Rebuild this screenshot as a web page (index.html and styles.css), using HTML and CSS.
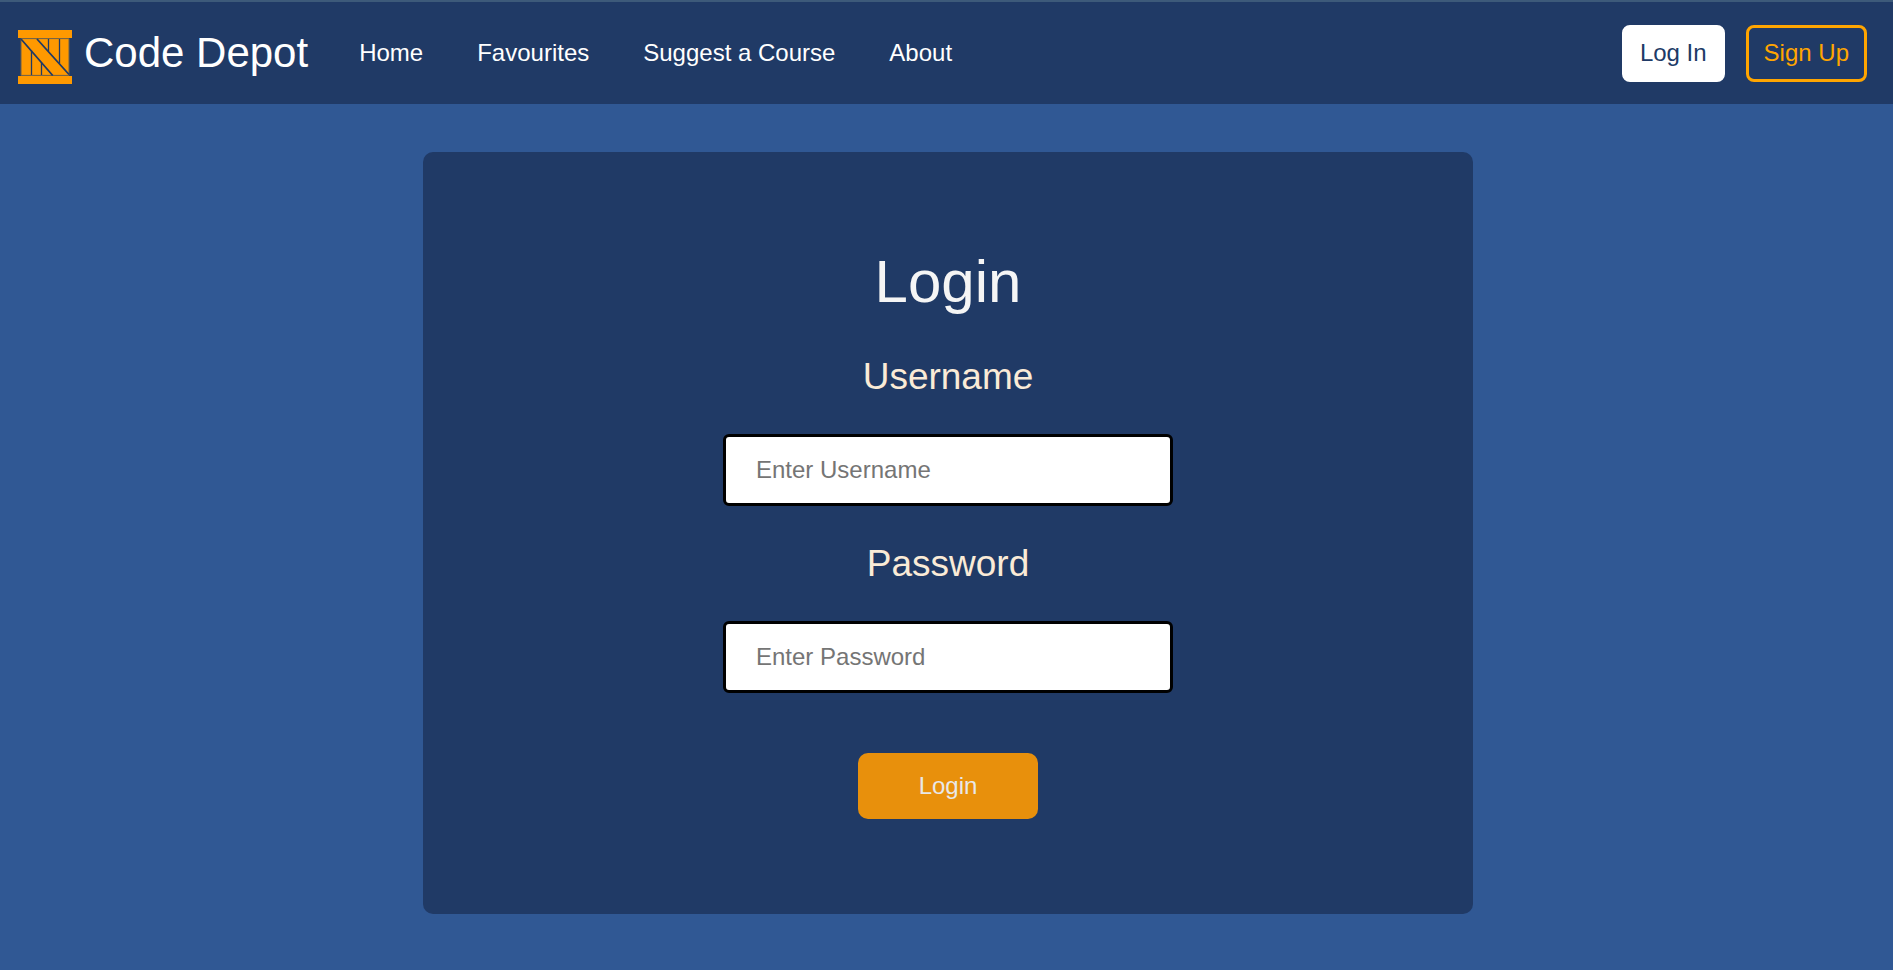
FILE: index.html
```html
<!DOCTYPE html>
<html lang="en">
<head>
    <meta charset="UTF-8">
    <meta name="viewport" content="width=device-width, initial-scale=1.0">
    <title>Code Depot - Login</title>
    <link rel="stylesheet" href="styles.css">
</head>
<body>
    <header class="navbar">
        <a href="#" class="brand">
            <svg class="logo" viewBox="0 0 54 54" aria-hidden="true">
                <rect x="3" y="8" width="48" height="38" fill="#ff9900"/>
                <path d="M3 8.6H51V45.4H3Z" fill="none" stroke="#6b5f4a" stroke-width="1"/>
                <g fill="none" stroke="#203a66" stroke-width="1.3">
                    <path d="M13.5 20.5V45M23.5 32.5V45M30.5 9V21.5M41.5 9V33.5"/>
                    <path stroke-width="1.8" d="M3 9L34.7 45.5M19 9L51 44.5"/>
                </g>
                <rect width="54" height="8" fill="#ff9900"/>
                <rect y="46" width="54" height="8" fill="#ff9900"/>
            </svg>
            <span>Code Depot</span>
        </a>
        <nav class="nav-links">
            <a href="#">Home</a>
            <a href="#">Favourites</a>
            <a href="#">Suggest a Course</a>
            <a href="#">About</a>
        </nav>
        <div class="nav-buttons">
            <button type="button" class="btn btn-login">Log In</button>
            <button type="button" class="btn btn-signup">Sign Up</button>
        </div>
    </header>

    <main class="content">
        <form class="login-form">
            <h1>Login</h1>
            <label for="username">Username</label>
            <input type="text" id="username" name="username" placeholder="Enter Username">
            <label for="password">Password</label>
            <input type="password" id="password" name="password" placeholder="Enter Password">
            <button type="submit" class="submit-btn">Login</button>
        </form>
    </main>
</body>
</html>
```

FILE: styles.css
```css
* {
    box-sizing: border-box;
}
body {
    margin: 0;
    font-family: Arial, "Liberation Sans", sans-serif;
    font-size: 24px;
    background-color: #305894;
}
a {
    color: white;
    text-decoration: none;
}
button,
input {
    font-family: inherit;
    font-size: 24px;
}

/* navbar */
.navbar {
    display: flex;
    align-items: center;
    padding: 20px 26px 20px 18px;
    border-top: 2px solid #3d5a7a;
    background-color: #203a66;
}
.brand {
    display: flex;
    align-items: center;
    gap: 12px;
    font-size: 42px;
    line-height: 48px;
}
.logo {
    width: 54px;
    height: 54px;
    margin-top: 8px;
}
.nav-links {
    display: flex;
    gap: 54px;
    margin-left: 51px;
}
.nav-buttons {
    display: flex;
    gap: 21px;
    margin-left: auto;
}
.btn {
    padding: 11px 15px 13px;
    border: 3px solid white;
    border-radius: 8px;
    line-height: 27px;
    cursor: pointer;
}
.btn-login {
    background-color: white;
    color: #203a66;
}
.btn-signup {
    border-color: orange;
    background-color: transparent;
    color: orange;
}

/* login form */
.content {
    padding: 48px 15px 50px 18px;
}
.login-form {
    display: flex;
    flex-direction: column;
    align-items: center;
    gap: 36px;
    max-width: 1050px;
    margin: 0 auto;
    padding: 93px 20px 95px;
    border-radius: 10px;
    background-color: #203a66;
}
.login-form h1 {
    margin: 0;
    font-size: 60px;
    font-weight: normal;
    line-height: 74px;
    color: whitesmoke;
}
.login-form label {
    font-size: 37px;
    line-height: 43px;
    color: antiquewhite;
}
.login-form input {
    width: 100%;
    max-width: 450px;
    height: 72px;
    padding: 0 30px;
    border: 3px solid black;
    border-radius: 6px;
    background-color: white;
}
.login-form input::placeholder {
    color: #757575;
}
.submit-btn {
    width: 180px;
    height: 66px;
    margin-top: 24px;
    border: none;
    border-radius: 10px;
    background-color: #e8900c;
    color: #e8e8e8;
    cursor: pointer;
}
```
